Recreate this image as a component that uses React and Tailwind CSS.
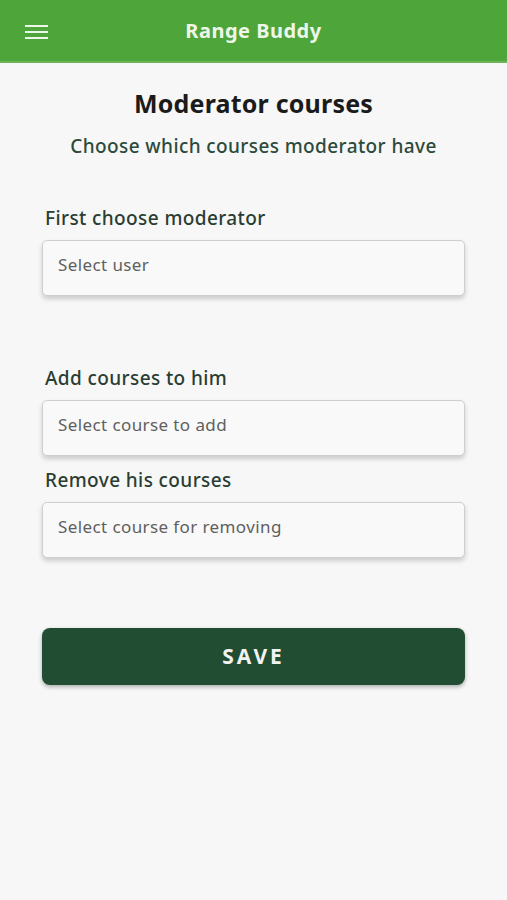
import React from 'react';

const font = { fontFamily: '"Noto Sans", "Open Sans", sans-serif' };

const SelectBox = ({ placeholder }) => (
  <div className="h-[56px] bg-[#f9f9f9] border border-[#cfcfcf] rounded-[5px] shadow-[0_3px_5px_rgba(0,0,0,0.18)] px-[15px] pt-[12px]">
    <span className="text-[17px] tracking-[0.4px] leading-[24px] text-[#5f5f5f]">{placeholder}</span>
  </div>
);

const Label = ({ children, className }) => (
  <label className={`text-[19px] font-medium tracking-[0.4px] leading-[24px] text-[#2a3d33] ml-[3px] mb-[10px] ${className}`}>
    {children}
  </label>
);

const App = () => {
  return (
    <div className="w-[507px] h-[900px] bg-[#f7f7f7] flex flex-col" style={font}>
      {/* Header */}
      <div className="h-[63px] bg-[#4ea53a] border-b-2 border-[#6cb35a] flex items-center relative">
        <div className="absolute left-[25px] top-[25px] flex flex-col gap-[4px]">
          <span className="block w-[23px] h-[2px] bg-[#eef6e9]" />
          <span className="block w-[23px] h-[2px] bg-[#eef6e9]" />
          <span className="block w-[23px] h-[2px] bg-[#eef6e9]" />
        </div>
        <h1 className="flex-1 text-center text-[20px] font-bold tracking-[0.5px] text-[#eef6e9] pt-[1px]">Range Buddy</h1>
      </div>

      {/* Content */}
      <div className="px-[42px] pt-[22px] flex flex-col">
        <h2 className="text-center text-[25px] font-bold tracking-[0.2px] text-[#1b1b1b] leading-[36px]">Moderator courses</h2>
        <p className="text-center text-[19px] font-medium tracking-[0.4px] leading-[26px] text-[#2c4a3c] mt-[12px]">Choose which courses moderator have</p>

        <Label className="mt-[47px]">First choose moderator</Label>
        <SelectBox placeholder="Select user" />

        <Label className="mt-[70px]">Add courses to him</Label>
        <SelectBox placeholder="Select course to add" />

        <Label className="mt-[12px]">Remove his courses</Label>
        <SelectBox placeholder="Select course for removing" />

        <button className="mt-[70px] h-[57px] bg-[#214d33] rounded-[8px] shadow-[0_2px_4px_rgba(0,0,0,0.3)] text-[#f2f2f2] text-[21px] font-bold tracking-[3px]">
          SAVE
        </button>
      </div>
    </div>
  );
};

export default App;
